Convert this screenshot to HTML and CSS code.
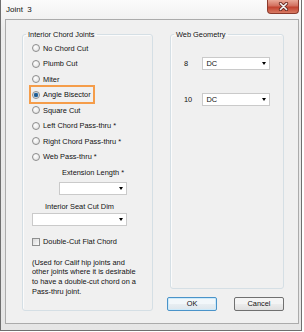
FILE: index.html
```html
<!DOCTYPE html>
<html>
<head>
<meta charset="utf-8">
<link rel="stylesheet" href="styles.css">
</head>
<body>
<div class="window">
  <div class="titlebar">
    <span class="title">Joint&nbsp; 3</span>
    <div class="close">
      <svg width="11" height="9" viewBox="0 0 11 9">
        <path d="M2.5 1.5 L8.5 7.5 M8.5 1.5 L2.5 7.5" stroke="#6a2a20" stroke-width="3.2" stroke-linecap="round"/>
        <path d="M2.5 1.5 L8.5 7.5 M8.5 1.5 L2.5 7.5" stroke="#f4f4f4" stroke-width="1.6" stroke-linecap="round"/>
      </svg>
    </div>
  </div>
  <div class="client">
    <fieldset class="group left">
      <legend>Interior Chord Joints</legend>
      <div class="left-body">
        <div class="radios">
          <label class="opt"><span class="radio"></span>No Chord Cut</label>
          <label class="opt"><span class="radio"></span>Plumb Cut</label>
          <label class="opt"><span class="radio"></span>Miter</label>
          <label class="opt hl"><span class="radio on"></span>Angle Bisector</label>
          <label class="opt"><span class="radio"></span>Square Cut</label>
          <label class="opt"><span class="radio"></span>Left Chord Pass-thru *</label>
          <label class="opt"><span class="radio"></span>Right Chord Pass-thru *</label>
          <label class="opt"><span class="radio"></span>Web Pass-thru *</label>
        </div>
        <div class="combo-block ext">
          <div class="combo-label">Extension Length *</div>
          <div class="combo"><span class="arrow"></span></div>
        </div>
        <div class="combo-block seat">
          <div class="combo-label">Interior Seat Cut Dim</div>
          <div class="combo"><span class="arrow"></span></div>
        </div>
        <label class="opt chk"><span class="check"></span>Double-Cut Flat Chord</label>
        <p class="note">(Used for Calif hip joints and<br>other joints where it is desirable<br>to have a double-cut chord on a<br>Pass-thru joint.</p>
      </div>
    </fieldset>
    <div class="right-col">
      <fieldset class="group right">
        <legend>Web Geometry</legend>
        <div class="right-body">
          <span class="num">8</span>
          <div class="combo"><span class="val">DC</span><span class="arrow"></span></div>
          <span class="num">10</span>
          <div class="combo"><span class="val">DC</span><span class="arrow"></span></div>
        </div>
      </fieldset>
      <div class="buttons">
        <button class="btn default">OK</button>
        <button class="btn">Cancel</button>
      </div>
    </div>
  </div>
</div>
</body>
</html>
```
FILE: styles.css
```css
body {
  margin: 0;
  background: #ffffff;
  font-family: "Liberation Sans", Arial, sans-serif;
  font-size: 7.4px;
  color: #111111;
}

.window {
  width: 302px;
  height: 331px;
  box-sizing: border-box;
  border: 1px solid #6f6f6f;
  border-top: 0;
  background: linear-gradient(#fbfbfb, #ececec 30px, #e6e6e6);
  display: flex;
  flex-direction: column;
}

.titlebar {
  height: 19px;
  display: flex;
  align-items: flex-start;
  flex: none;
}

.title {
  font-size: 8px;
  line-height: 20px;
  padding-left: 5px;
  color: #111;
}

.close {
  margin-left: auto;
  margin-right: 2px;
  width: 32px;
  height: 14px;
  box-sizing: border-box;
  border: 1px solid #8b3a2c;
  border-top: 0;
  border-radius: 0 0 4px 4px;
  background: linear-gradient(#e9a897, #d2705e 45%, #c2432f 55%, #d87a63);
  display: flex;
  align-items: center;
  justify-content: center;
}

.client {
  margin-left: 4px;
  width: 294px;
  height: 305px;
  box-sizing: border-box;
  border: 1px solid #ababab;
  background: #f0f0f0;
  display: flex;
  padding: 10px 14px 12px 16px;
  gap: 14px;
}

.group {
  margin: 0;
  padding: 0;
  min-width: 0;
  border: 1px solid #d5dfe5;
  border-radius: 3px;
  box-shadow: inset 1px 1px 0 #fbfbfb;
}

.group legend {
  padding: 0 2px;
  margin-left: 3px;
  line-height: 9px;
}

.left {
  width: 131px;
  box-sizing: border-box;
}

.left-body {
  padding: 4.3px 0 0 9px;
}

.radios {
  display: flex;
  flex-direction: column;
  align-items: flex-start;
  gap: 5.5px;
}

.opt {
  display: flex;
  align-items: center;
  height: 10px;
  gap: 3px;
}

.radio {
  width: 8px;
  height: 8px;
  box-sizing: border-box;
  border-radius: 50%;
  border: 1px solid #8d8d8d;
  background: radial-gradient(circle at 40% 35%, #ffffff, #dcdcdc);
}

.radio.on {
  background: radial-gradient(circle, #1f5a8e 0 1.4px, #4f8cc2 2.1px, #e6e6e6 2.6px, #f6f6f6);
}

.opt.hl {
  position: relative;
}

.opt.hl::after {
  content: "";
  position: absolute;
  left: -2.7px;
  right: -4.4px;
  top: -4.8px;
  bottom: -4.2px;
  border: 2px solid #f59d4a;
}

.combo-block {
  display: flex;
  flex-direction: column;
  align-items: center;
}

.combo-label {
  line-height: 10px;
}

.ext {
  margin: 5.9px 0 0 27px;
  width: 68px;
}

.ext .combo {
  margin-top: 4px;
}

.seat {
  margin-top: 7px;
  width: 95px;
}

.seat .combo {
  margin-top: 1.6px;
}

.combo {
  width: 100%;
  height: 13px;
  box-sizing: border-box;
  border: 1px solid #cacaca;
  background: #ffffff;
  display: flex;
  align-items: center;
  padding: 0 3px;
}

.arrow {
  margin-left: auto;
  width: 0;
  height: 0;
  border-left: 2.5px solid transparent;
  border-right: 2.5px solid transparent;
  border-top: 3px solid #000;
}

.chk {
  margin-top: 10.4px;
}

.check {
  width: 8px;
  height: 8px;
  box-sizing: border-box;
  border: 1px solid #8e8f8f;
  background: linear-gradient(135deg, #d8d8d8, #fbfbfb);
}

.note {
  margin: 11.2px 0 0;
  line-height: 9.6px;
}

.right-col {
  width: 117px;
  display: flex;
  flex-direction: column;
}

.right {
  margin-left: 3px;
  height: 259px;
  box-sizing: border-box;
}

.right-body {
  display: grid;
  grid-template-columns: 18px 68px;
  row-gap: 23.3px;
  align-items: center;
  padding: 18px 0 0 13px;
}

.val {
  padding-left: 0.5px;
}

.buttons {
  margin-top: auto;
  display: flex;
  justify-content: space-between;
}

.btn {
  width: 50px;
  height: 14px;
  box-sizing: border-box;
  border: 1px solid #707070;
  border-radius: 2px;
  padding: 0;
  background: linear-gradient(#f4f4f4 50%, #ececec 50%, #dfdfdf);
  font-family: inherit;
  font-size: 7.4px;
  color: #111111;
  line-height: 12px;
  text-align: center;
}

.btn.default {
  border-color: #4a93c9;
  box-shadow: inset 0 0 0 1px #cdeafa;
  background: linear-gradient(#f2f7fa 50%, #e8eef2 50%, #dde6ec);
}
```
